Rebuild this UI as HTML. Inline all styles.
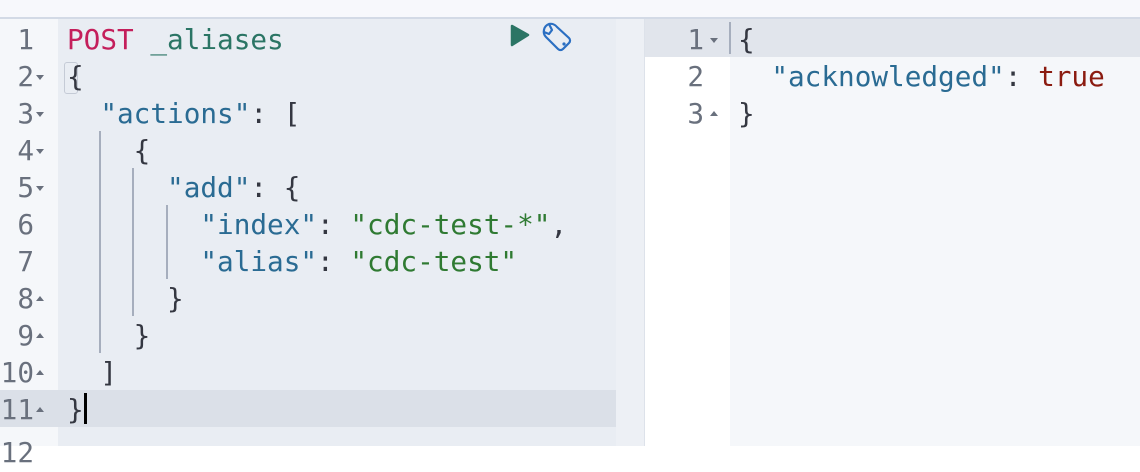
<!DOCTYPE html>
<html><head><meta charset="utf-8"><style>
*{margin:0;padding:0;box-sizing:border-box}
body{width:1140px;height:446px;overflow:hidden;background:#fff;font-family:"DejaVu Sans Mono","Liberation Mono",monospace;font-size:27.7px;position:relative}
.top{position:absolute;left:0;top:0;width:1140px;height:19px;background:#f7f8fc;border-bottom:2px solid #d3dae6}
.lg{position:absolute;left:0;top:19px;width:58px;height:427px;background:#f5f7fa}
.lc{position:absolute;left:58px;top:19px;width:558px;height:427px;background:#e9edf3}
.div{position:absolute;left:616px;top:19px;width:29px;height:427px;background:#edf0f5;border-right:1px solid #dde2ea}
.rg{position:absolute;left:645px;top:19px;width:85px;height:427px;background:#fff}
.rc{position:absolute;left:730px;top:19px;width:410px;height:427px;background:#f5f7fa}
.ln{position:absolute;height:37px;line-height:39px;white-space:pre;color:#343741}
.num{position:absolute;height:37px;line-height:39px;color:#69707d;text-align:right}
.d,.u2{position:absolute;width:0;height:0;border-left:4.5px solid transparent;border-right:4.5px solid transparent}
.d{border-top:5px solid #69707d}
.u2{border-bottom:5px solid #69707d}
.k{color:#2a6b93}.s{color:#2f7a32}.p{color:#c41f5b}.u{color:#2b7565}.t{color:#8b1b10}
.g{position:absolute;width:2px;background:#a6aebd;height:37px}
</style></head><body>
<div class="top"></div>
<div class="lg"></div><div class="lc"></div><div class="div"></div><div class="rg"></div><div class="rc"></div>
<div style="position:absolute;left:0;top:390px;width:616px;height:37px;background:#dbe0e8"></div>
<div style="position:absolute;left:645px;top:19px;width:495px;height:38px;background:#e1e5ec"></div>
<div style="position:absolute;left:64px;top:62px;width:14px;height:32px;border:1px solid #c5cbd6;border-radius:3px"></div>
<div style="position:absolute;left:84px;top:393px;width:3px;height:31px;background:#000"></div>
<div style="position:absolute;left:729px;top:22px;width:2px;height:32px;background:#a6aebd"></div>

<div class="g" style="left:99px;top:131px;height:222px"></div>
<div class="g" style="left:132px;top:168px;height:148px"></div>
<div class="g" style="left:166px;top:205px;height:74px"></div>

<div class="num" style="left:0;width:34px;top:20px">1</div>
<div class="num" style="left:0;width:34px;top:57px">2</div><div class="d" style="left:36px;top:75px"></div>
<div class="num" style="left:0;width:34px;top:94px">3</div><div class="d" style="left:36px;top:112px"></div>
<div class="num" style="left:0;width:34px;top:131px">4</div><div class="d" style="left:36px;top:149px"></div>
<div class="num" style="left:0;width:34px;top:168px">5</div><div class="d" style="left:36px;top:186px"></div>
<div class="num" style="left:0;width:34px;top:205px">6</div>
<div class="num" style="left:0;width:34px;top:242px">7</div>
<div class="num" style="left:0;width:34px;top:279px">8</div><div class="u2" style="left:36px;top:296px"></div>
<div class="num" style="left:0;width:34px;top:316px">9</div><div class="u2" style="left:36px;top:333px"></div>
<div class="num" style="left:0;width:34px;top:353px">10</div><div class="u2" style="left:36px;top:370px"></div>
<div class="num" style="left:0;width:34px;top:390px">11</div><div class="u2" style="left:36px;top:407px"></div>
<div class="num" style="left:0;width:34px;top:433px">12</div>

<div class="ln" style="left:67px;top:20px"><span class="p">POST</span> <span class="u">_aliases</span></div>
<div class="ln" style="left:67px;top:57px">{</div>
<div class="ln" style="left:67px;top:94px">  <span class="k">"actions"</span>: [</div>
<div class="ln" style="left:67px;top:131px">    {</div>
<div class="ln" style="left:67px;top:168px">      <span class="k">"add"</span>: {</div>
<div class="ln" style="left:67px;top:205px">        <span class="k">"index"</span>: <span class="s">"cdc-test-*"</span>,</div>
<div class="ln" style="left:67px;top:242px">        <span class="k">"alias"</span>: <span class="s">"cdc-test"</span></div>
<div class="ln" style="left:67px;top:279px">      }</div>
<div class="ln" style="left:67px;top:316px">    }</div>
<div class="ln" style="left:67px;top:353px">  ]</div>
<div class="ln" style="left:67px;top:390px">}</div>

<svg style="position:absolute;left:508px;top:22px" width="72" height="30" viewBox="0 0 72 30">
<path d="M4 4 L20 13 L4 23 Z" fill="#2b7565" stroke="#2b7565" stroke-width="2.5" stroke-linejoin="round"/>
<g fill="none" stroke="#2b6fc2" stroke-width="2.2" stroke-linecap="round" stroke-linejoin="round">
<path d="M41 2 A8 8 0 0 0 38 15 L50 27 A3.5 3.5 0 0 0 55 27 L61 21 A3.5 3.5 0 0 0 61 16 L49 5 A8 8 0 0 0 41 2 Z M41 2 L44 8 L41 12 L36 10"/>
</g>
<circle cx="56" cy="22" r="1.6" fill="#2b6fc2"/>
</svg>

<div class="num" style="left:650px;width:54px;top:20px">1</div><div class="d" style="left:710px;top:38px"></div>
<div class="num" style="left:650px;width:54px;top:57px">2</div>
<div class="num" style="left:650px;width:54px;top:94px">3</div><div class="u2" style="left:710px;top:111px"></div>
<div class="ln" style="left:738px;top:20px">{</div>
<div class="ln" style="left:738px;top:57px">  <span class="k">"acknowledged"</span>: <span class="t">true</span></div>
<div class="ln" style="left:738px;top:94px">}</div>
</body></html>
